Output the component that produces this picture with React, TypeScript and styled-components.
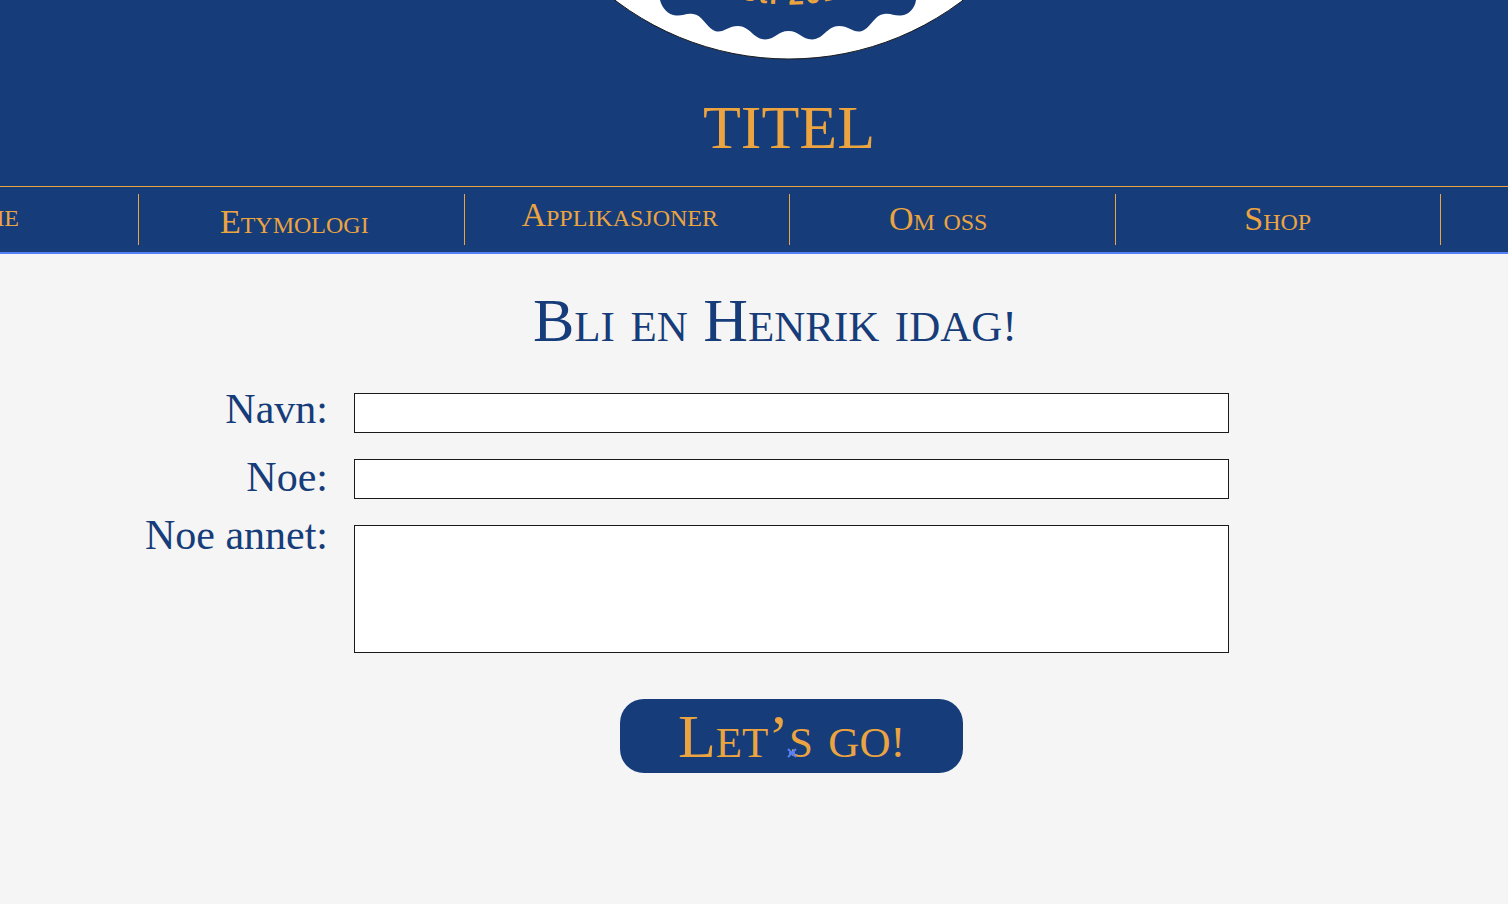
import React from "react";
import styled, { createGlobalStyle } from "styled-components";

const navy = "#163c79";
const gold = "#eba440";
const paper = "#f5f5f5";

const GlobalStyle = createGlobalStyle`
  *, *::before, *::after { box-sizing: border-box; }
  body {
    margin: 0;
    background: ${paper};
    color: ${navy};
    font-family: "Liberation Serif", "Times New Roman", serif;
  }
`;

const Header = styled.header`
  background: ${navy};
  color: ${gold};
  border-bottom: 2px solid #5580f6;
`;

const Brand = styled.div`
  display: flex;
  flex-direction: column;
  align-items: center;
  height: 186px;
  padding-left: 70px;
`;

const Emblem = styled.svg`
  display: block;
  flex: none;
`;

const Title = styled.h1`
  margin: 26px 0 0;
  font-size: 62px;
  line-height: 78px;
  font-weight: 400;
`;

const Nav = styled.nav`
  display: grid;
  grid-template-columns: 139px repeat(4, 1fr) 67px;
  height: 66px;
  padding: 7px 0;
  border-top: 1px solid ${gold};
`;

const NavCell = styled.div<{ $align?: string; $inset?: number; $end?: boolean }>`
  display: flex;
  justify-content: ${(p) => (p.$end ? "flex-end" : "center")};
  align-items: ${(p) => p.$align ?? "center"};
  min-width: 0;
  overflow: hidden;
  padding: 3px ${(p) => p.$inset ?? 0}px 5px 0;
  border-right: 1px solid ${gold};

  &:last-child { border-right: 0; }
`;

const NavLink = styled.a`
  color: inherit;
  font-size: 34px;
  line-height: 36px;
  font-variant-caps: small-caps;
  text-decoration: none;
  white-space: nowrap;
`;

const Heading = styled.h2`
  margin: 0;
  padding: 26px 0 0 42px;
  text-align: center;
  font-size: 62px;
  line-height: 80px;
  font-weight: 400;
  font-variant-caps: small-caps;
`;

const SmallMark = styled.span`
  font-size: 44px;
  line-height: 1;
`;

const Form = styled.form`
  display: grid;
  grid-template-columns: 328px 1fr;
  column-gap: 26px;
  row-gap: 26px;
  padding: 33px 279px 48px 0;
`;

const Label = styled.label<{ $leading: number }>`
  justify-self: end;
  height: 40px;
  font-size: 42px;
  line-height: ${(p) => p.$leading}px;
  white-space: nowrap;
`;

const Input = styled.input`
  width: 100%;
  height: 40px;
  padding: 0 12px;
  border: 1px solid #1a1a1a;
  border-radius: 0;
  background: #fff;
  color: ${navy};
  font: 24px "Liberation Serif", serif;
`;

const Area = styled.textarea`
  display: block;
  width: 100%;
  height: 128px;
  padding: 8px 12px;
  border: 1px solid #1a1a1a;
  border-radius: 0;
  background: #fff;
  color: ${navy};
  font: 24px "Liberation Serif", serif;
  resize: none;
`;

const Submit = styled.button`
  position: relative;
  grid-column: 2;
  justify-self: center;
  width: 343px;
  height: 74px;
  margin-top: 20px;
  padding: 0;
  border: 0;
  border-radius: 24px;
  background: ${navy};
  color: ${gold};
  font-family: inherit;
  font-size: 62px;
  line-height: 74px;
  font-variant-caps: small-caps;
`;

const Marker = styled.svg`
  position: absolute;
  left: 50%;
  top: 49px;
  margin-left: -5px;
`;

function Logo() {
  return (
    <Emblem width="360" height="62" viewBox="0 0 360 62" aria-label="Est. 2016">
      <circle cx="180" cy="-228" r="287" fill="#fff" stroke="#1a1a1a" />
      <path
        fill={navy}
        d="M51 0C53 8 59 15 67 15.500C74 16 77 13 84 14C93 15 97 26 104 30C113 35 118 26 129 26C141 26 144 39 156 39.500C167 39 169 31 179.500 31C190 31 192 39 203 39.500C215 39 218 26 230 26C241 26 246 35 255 30C262 26 266 15 275 14C282 13 285 16 292 15.500C300 15 306 8 307 0Z"
      />
      <path id="year-arc" fill="none" d="M80 -20Q180 29 280 -20" />
      <text fill={gold} fontFamily="Liberation Sans" fontSize="28" fontWeight="700" letterSpacing="2" textAnchor="middle">
        <textPath href="#year-arc" startOffset="50%">Est. 2016</textPath>
      </text>
    </Emblem>
  );
}

export default function App() {
  return (
    <>
      <GlobalStyle />
      <Header>
        <Brand>
          <Logo />
          <Title>TITEL</Title>
        </Brand>
        <Nav>
          <NavCell $end $align="flex-start" $inset={119}><NavLink href="#home">Home</NavLink></NavCell>
          <NavCell $align="flex-end" $inset={14}><NavLink href="#etymologi">Etymologi</NavLink></NavCell>
          <NavCell $align="flex-start" $inset={14}><NavLink href="#applikasjoner">Applikasjoner</NavLink></NavCell>
          <NavCell $inset={28}><NavLink href="#om-oss">Om oss</NavLink></NavCell>
          <NavCell><NavLink href="#shop">Shop</NavLink></NavCell>
          <NavCell />
        </Nav>
      </Header>
      <main>
        <Heading>Bli en Henrik idag<SmallMark>!</SmallMark></Heading>
        <Form>
          <Label $leading={32} htmlFor="navn">Navn:</Label>
          <Input id="navn" />
          <Label $leading={36} htmlFor="noe">Noe:</Label>
          <Input id="noe" />
          <Label $leading={20} htmlFor="noe-annet">Noe annet:</Label>
          <Area id="noe-annet" />
          <Submit type="button">
            Let’s go<SmallMark>!</SmallMark>
            <Marker width="10" height="10" viewBox="0 0 10 10" aria-hidden="true">
              <path d="M1 1L9 9M9 1L1 9M2 5H8" stroke="#5580f6" strokeWidth="2" />
            </Marker>
          </Submit>
        </Form>
      </main>
    </>
  );
}
